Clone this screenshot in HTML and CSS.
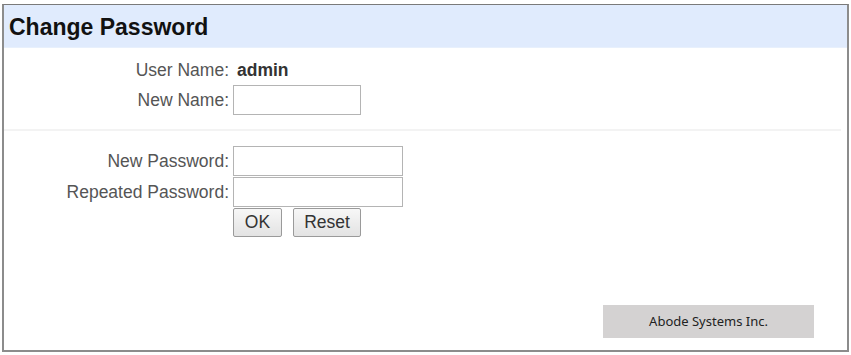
FILE: index.html
```html
<!DOCTYPE html>
<html lang="en">
<head>
	<meta charset="UTF-8" />
	<title>Change Password</title>
	<link rel="stylesheet" href="styles.css">
</head>
<body>

	<div class="panel">
		<div class="panel__header">Change Password</div>

		<div class="panel__section panel__section--name">
			<div class="form">
				<span class="form__label">User Name:</span>
				<span class="form__value">admin</span>

				<label class="form__label" for="new-name">New Name:</label>
				<div class="form__field"><input type="text" id="new-name" class="form__input form__input--short" /></div>
			</div>
		</div>

		<div class="panel__section panel__section--password">
			<div class="form">
				<label class="form__label" for="new-password">New Password:</label>
				<div class="form__field"><input type="password" id="new-password" class="form__input" /></div>

				<label class="form__label" for="repeated-password">Repeated Password:</label>
				<div class="form__field"><input type="password" id="repeated-password" class="form__input" /></div>

				<span></span>
				<div class="form__buttons">
					<button class="form__button form__button--ok">OK</button>
					<button class="form__button form__button--reset">Reset</button>
				</div>
			</div>
		</div>

		<div class="panel__footer">Abode Systems Inc.</div>
	</div>

</body>
</html>
```

FILE: styles.css
```css
* {
	box-sizing: border-box;
}

html {
	margin: 0px;
	padding: 0px;
}

body {
	margin: 0px;
	padding: 4px 0px 0px 2px;
	background-color: #ffffff;
	font-family: "Liberation Sans", Arial, sans-serif;
}

.panel {
	width: 847px;
	height: 348px;
	border: 2px solid #8c8c8c;
	border-top: 1px solid #7a7a7a;
	display: flex;
	flex-direction: column;
}

.panel__header {
	height: 43px;
	padding: 9px 0px 0px 5px;
	background-color: #e0ebfd;
	border-bottom: 1px solid #e8f0fc;
	color: #111111;
	font-size: 23px;
	font-weight: bold;
	line-height: 26px;
}

.panel__section--name {
	padding-top: 10px;
	padding-bottom: 14px;
	border-bottom: 2px solid #f3f3f3;
	margin-right: 6px;
}

.panel__section--password {
	padding-top: 15px;
}

.form {
	display: grid;
	grid-template-columns: 225px auto;
	column-gap: 4px;
	row-gap: 1px;
	align-items: center;
}

.panel__section--name .form {
	row-gap: 2px;
}

.form__label {
	text-align: right;
	color: #555555;
	font-size: 17.5px;
	line-height: 25px;
}

.form__value {
	padding-left: 4px;
	color: #333333;
	font-size: 17.5px;
	font-weight: bold;
	line-height: 25px;
}

.form__field {
	display: flex;
}

.form__input {
	width: 170px;
	height: 30px;
	border: 1px solid #b4b4b4;
	margin: 0px;
	padding: 2px 4px;
	font-family: inherit;
	font-size: 16px;
	background-color: #ffffff;
}

.form__input--short {
	width: 128px;
}

.form__buttons {
	display: flex;
	gap: 11px;
}

.form__button {
	height: 29px;
	margin: 0px;
	border: 1px solid #9a9a9a;
	border-radius: 2px;
	background: linear-gradient(#f7f7f7, #e3e3e3);
	color: #333333;
	font-family: inherit;
	font-size: 17.5px;
	padding: 0px;
}

.form__button--ok {
	width: 49px;
}

.form__button--reset {
	width: 68px;
}

.panel__footer {
	margin-top: auto;
	margin-bottom: 12px;
	margin-right: 33px;
	align-self: flex-end;
	width: 211px;
	height: 33px;
	background-color: #d4d2d2;
	color: #222222;
	font-family: "Noto Sans", "Open Sans", sans-serif;
	font-size: 13px;
	line-height: 33px;
	text-align: center;
}
```
